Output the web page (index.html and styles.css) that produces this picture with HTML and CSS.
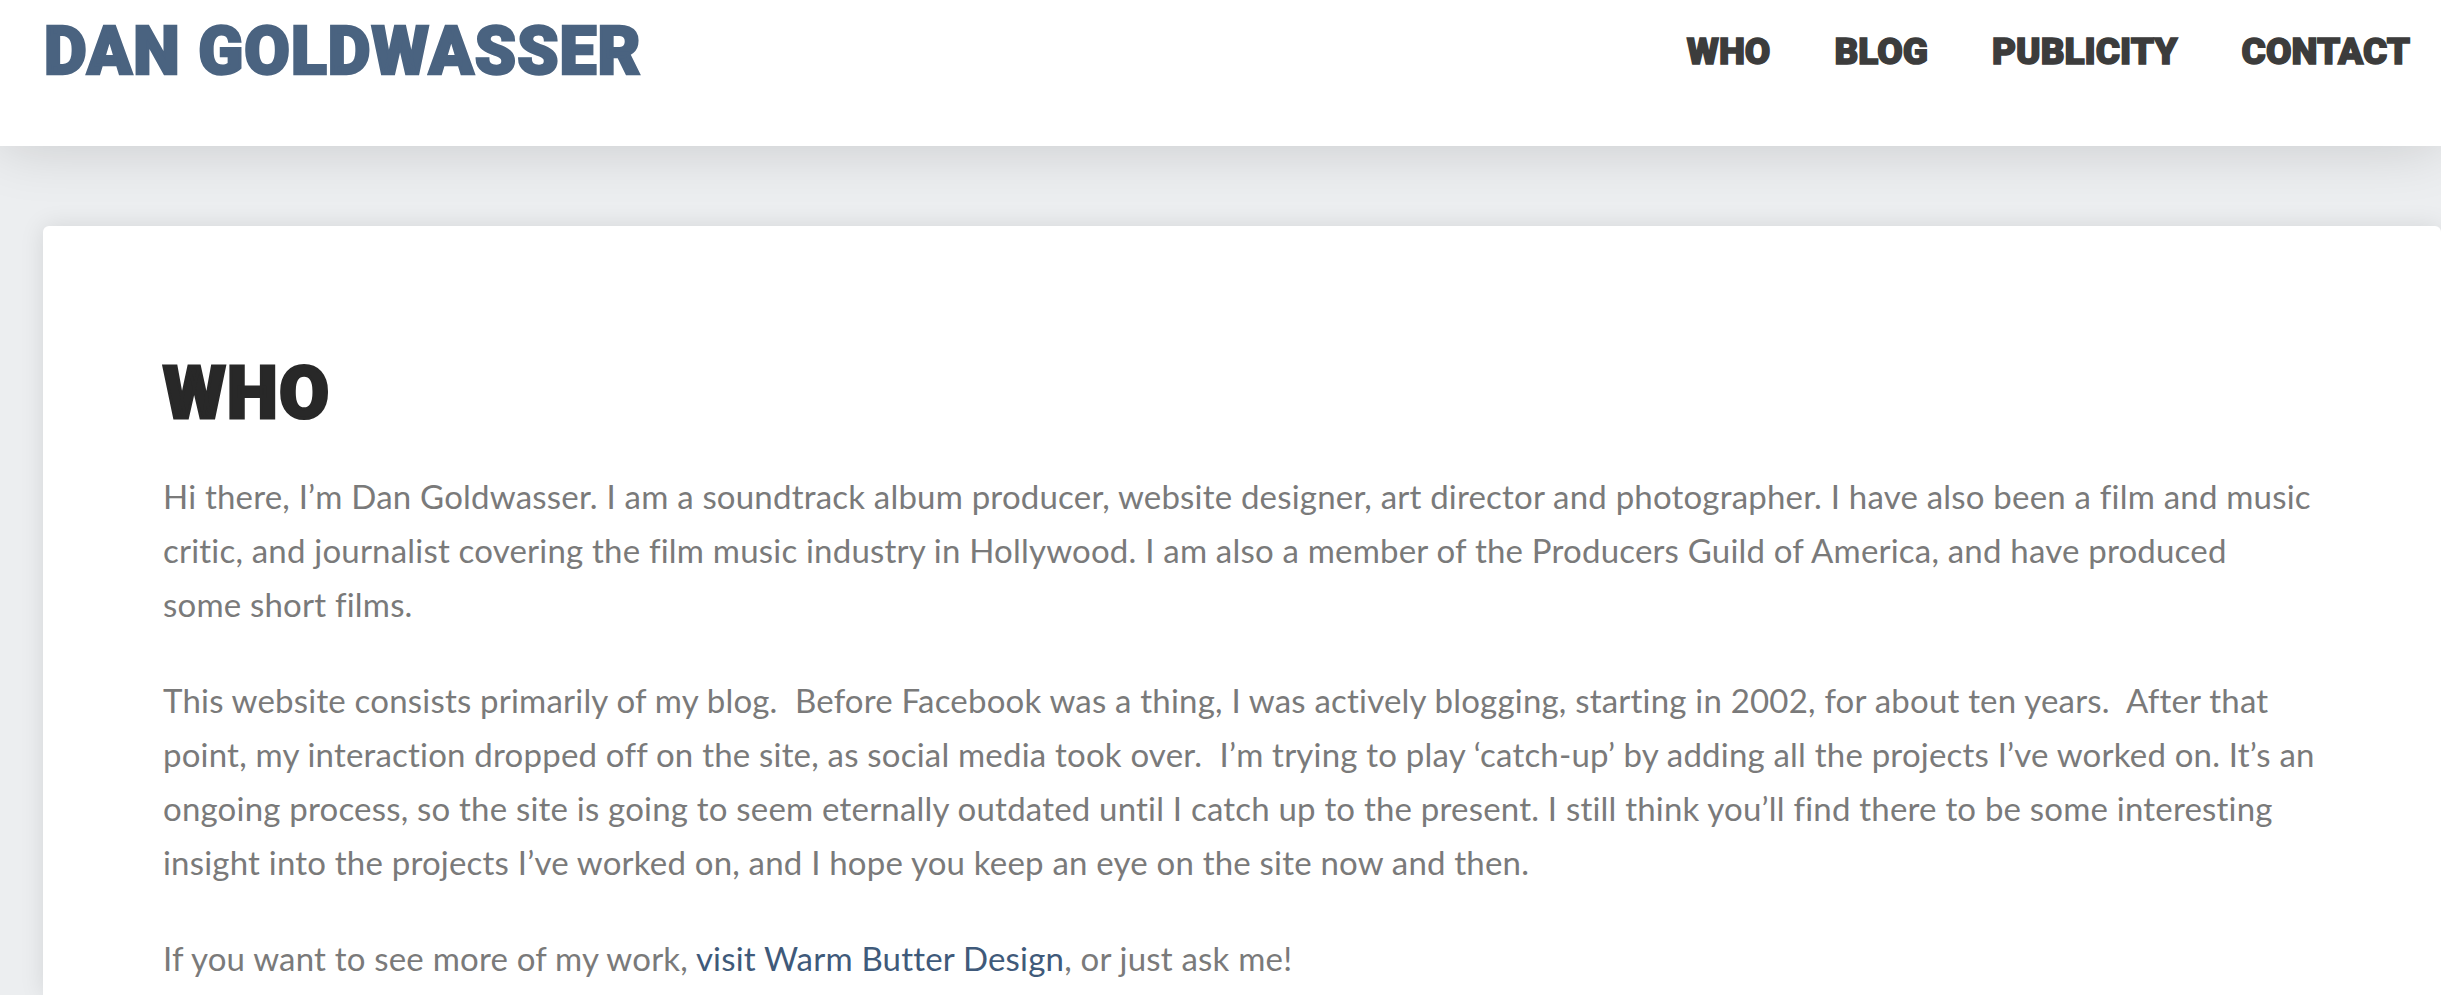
FILE: index.html
```html
<!DOCTYPE html>
<html lang="en">

<head>
    <meta charset="UTF-8">
    <title>Who - Dan Goldwasser</title>
    <link rel="stylesheet" href="styles.css">
</head>

<body>

    <header class="site-header">
        <a class="logo" href="#">DAN GOLDWASSER</a>
        <nav class="main-nav">
            <a href="#">WHO</a>
            <a href="#">BLOG</a>
            <a href="#">PUBLICITY</a>
            <a href="#">CONTACT</a>
        </nav>
    </header>

    <main class="card">
        <h1>WHO</h1>
        <p>Hi there, I’m Dan Goldwasser. I am a soundtrack album producer, website designer, art director and photographer. I have also been a film and music<br>critic, and journalist covering the film music industry in Hollywood. I am also a member of the Producers Guild of America, and have produced<br>some short films.</p>
        <p>This website consists primarily of my blog.&nbsp; Before Facebook was a thing, I was actively blogging, starting in 2002, for about ten years.&nbsp; After that<br>point, my interaction dropped off on the site, as social media took over.&nbsp; I’m trying to play ‘catch-up’ by adding all the projects I’ve worked on. It’s an<br>ongoing process, so the site is going to seem eternally outdated until I catch up to the present. I still think you’ll find there to be some interesting<br>insight into the projects I’ve worked on, and I hope you keep an eye on the site now and then.</p>
        <p>If you want to see more of my work, <a href="#">visit Warm Butter Design</a>, or just ask me!</p>
    </main>

</body>

</html>
```

FILE: styles.css
```css
* {
    margin: 0;
    padding: 0;
    box-sizing: border-box;
}

html, body {
    height: 100%;
    overflow: hidden;
}

body {
    display: flex;
    flex-direction: column;
    font-family: 'Lato', sans-serif;
    background-color: #eceef0;
    color: #7a7a7a;
}

a {
    text-decoration: none;
}

.site-header {
    position: relative;
    flex: none;
    height: 146px;
    padding: 0 31px 0 44px;
    display: flex;
    justify-content: space-between;
    align-items: flex-start;
    background: #fff;
    box-shadow: 0 0 60px rgba(0, 0, 0, 0.16);
}

.logo {
    font-family: 'Roboto', sans-serif;
    font-weight: 900;
    font-size: 66px;
    line-height: 104px;
    letter-spacing: 1.1px;
    color: #4a6380;
    -webkit-text-stroke: 2.5px #4a6380;
}

.main-nav {
    display: flex;
    gap: 64px;
}

.main-nav a {
    font-family: 'Roboto', sans-serif;
    font-weight: 900;
    font-size: 37px;
    line-height: 103px;
    color: #3c3c3c;
    -webkit-text-stroke: 1.5px #3c3c3c;
}

.card {
    flex: 1;
    overflow: hidden;
    margin: 80px 0 0 43px;
    padding: 132px 120px 0;
    background: #fff;
    border-radius: 6px 6px 0 0;
    box-shadow: 0 0 24px rgba(0, 0, 0, 0.1);
}

.card h1 {
    font-family: 'Roboto', sans-serif;
    font-weight: 900;
    font-size: 72px;
    line-height: 72px;
    letter-spacing: 1.5px;
    color: #282828;
    -webkit-text-stroke: 3px #282828;
    margin-bottom: 39px;
}

.card p {
    font-size: 33px;
    line-height: 54px;
    letter-spacing: 0.2px;
    margin-bottom: 42px;
    white-space: nowrap;
}

.card p a {
    color: #3f5a7a;
}
```
